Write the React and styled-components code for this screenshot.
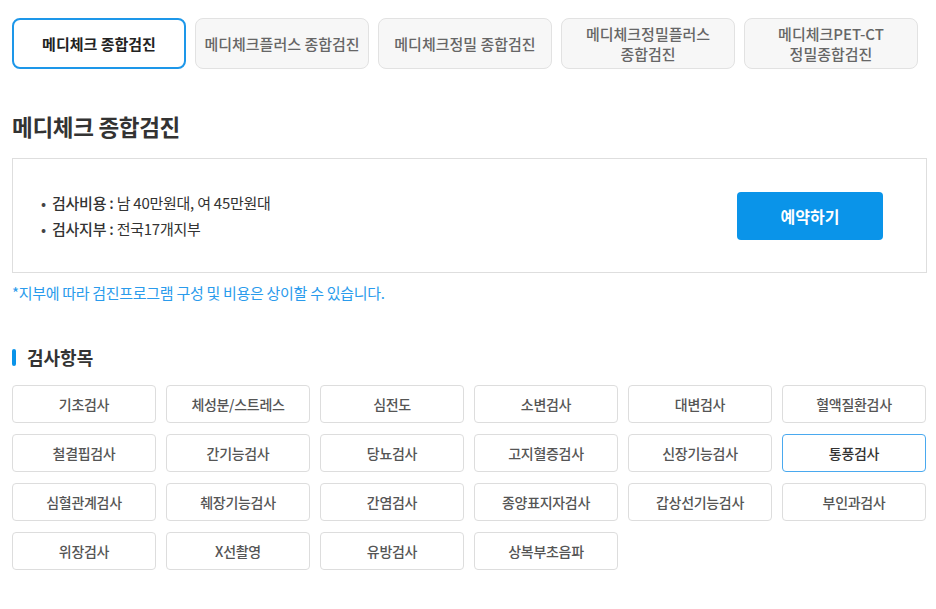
import React, { useState } from 'react';
import styled, { createGlobalStyle } from 'styled-components';

const GlobalStyle = createGlobalStyle`
  html, body {
    margin: 0;
    padding: 0;
    background: #fff;
  }
  body {
    font-family: "Noto Sans CJK KR", "Noto Sans", sans-serif;
    color: #333;
  }
`

const Page = styled.div`
  width: 915px;
  padding: 18px 0 0 12px;
`
const Tabs = styled.div`
  display: grid;
  grid-template-columns: repeat(5, 174px);
  column-gap: 9px;
`
const Tab = styled.button`
  height: 51px;
  box-sizing: border-box;
  border-radius: 8px;
  font-family: inherit;
  font-size: 15px;
  line-height: 20px;
  cursor: pointer;
  padding: 0 4px;
  border: ${p => p.$active ? '2px solid #1d97e9' : '1px solid #e2e2e2'};
  background: ${p => p.$active ? '#fff' : '#f7f7f7'};
  color: ${p => p.$active ? '#222' : '#666'};
  font-weight: ${p => p.$active ? 700 : 500};
`
const Title = styled.h2`
  margin: 42px 0 0;
  font-size: 22.5px;
  line-height: 30px;
  font-weight: 700;
  color: #333;
  letter-spacing: -0.3px;
`
const InfoBox = styled.div`
  margin-top: 17px;
  height: 115px;
  box-sizing: border-box;
  border: 1px solid #dedede;
  display: flex;
  align-items: center;
  justify-content: space-between;
  padding: 0 43px 0 28px;
`
const InfoList = styled.ul`
  list-style: none;
  margin: 0;
  padding: 0;
`
const InfoItem = styled.li`
  font-size: 15px;
  line-height: 26px;
  color: #333;
  letter-spacing: -0.25px;
  &::before {
    content: '•';
    display: inline-block;
    width: 11px;
    color: #444;
  }
`
const Label = styled.span`
  font-weight: 500;
`
const ReserveButton = styled.button`
  width: 146px;
  height: 48px;
  border: 0;
  border-radius: 4px;
  background: #0a94e9;
  color: #fff;
  font-family: inherit;
  font-size: 16px;
  font-weight: 700;
  cursor: pointer;
`
const Note = styled.p`
  margin: 10px 0 0;
  font-size: 15px;
  line-height: 20px;
  color: #2a9bec;
  letter-spacing: -0.3px;
`
const SectionTitle = styled.h3`
  margin: 41px 0 0;
  display: flex;
  align-items: center;
  gap: 11px;
  font-size: 18px;
  line-height: 26px;
  font-weight: 700;
  color: #333;
  &::before {
    content: '';
    width: 4px;
    height: 17px;
    border-radius: 2px;
    background: #0a94e9;
  }
`
const Grid = styled.div`
  margin-top: 15px;
  display: grid;
  grid-template-columns: repeat(6, 144px);
  column-gap: 10px;
  row-gap: 11px;
`
const Item = styled.button`
  height: 38px;
  box-sizing: border-box;
  border-radius: 4px;
  background: #fff;
  font-family: inherit;
  font-size: 14px;
  font-weight: 500;
  letter-spacing: -0.3px;
  cursor: pointer;
  border: 1px solid ${p => p.$active ? '#4aa9ef' : '#dddddd'};
  color: ${p => p.$active ? '#333' : '#555'};
`

const tabs = [
  '메디체크 종합검진',
  '메디체크플러스 종합검진',
  '메디체크정밀 종합검진',
  ['메디체크정밀플러스', '종합검진'],
  ['메디체크PET-CT', '정밀종합검진'],
];

const items = [
  '기초검사', '체성분/스트레스', '심전도', '소변검사', '대변검사', '혈액질환검사',
  '철결핍검사', '간기능검사', '당뇨검사', '고지혈증검사', '신장기능검사', '통풍검사',
  '심혈관계검사', '췌장기능검사', '간염검사', '종양표지자검사', '갑상선기능검사', '부인과검사',
  '위장검사', 'X선촬영', '유방검사', '상복부초음파',
];

const App = () => {
  const [tab, setTab] = useState(0);
  const [item, setItem] = useState(11);

  return (
    <Page>
      <GlobalStyle />
      <Tabs>
        {tabs.map((t, i) => (
          <Tab key={i} $active={tab === i} onClick={() => setTab(i)}>
            {Array.isArray(t) ? <>{t[0]}<br />{t[1]}</> : t}
          </Tab>
        ))}
      </Tabs>

      <Title>메디체크 종합검진</Title>

      <InfoBox>
        <InfoList>
          <InfoItem><Label>검사비용 :</Label> 남 40만원대, 여 45만원대</InfoItem>
          <InfoItem><Label>검사지부 :</Label> 전국17개지부</InfoItem>
        </InfoList>
        <ReserveButton>예약하기</ReserveButton>
      </InfoBox>

      <Note>*지부에 따라 검진프로그램 구성 및 비용은 상이할 수 있습니다.</Note>

      <SectionTitle>검사항목</SectionTitle>
      <Grid>
        {items.map((name, i) => (
          <Item key={name} $active={item === i} onClick={() => setItem(i)}>{name}</Item>
        ))}
      </Grid>
    </Page>
  )
}

export default App;
